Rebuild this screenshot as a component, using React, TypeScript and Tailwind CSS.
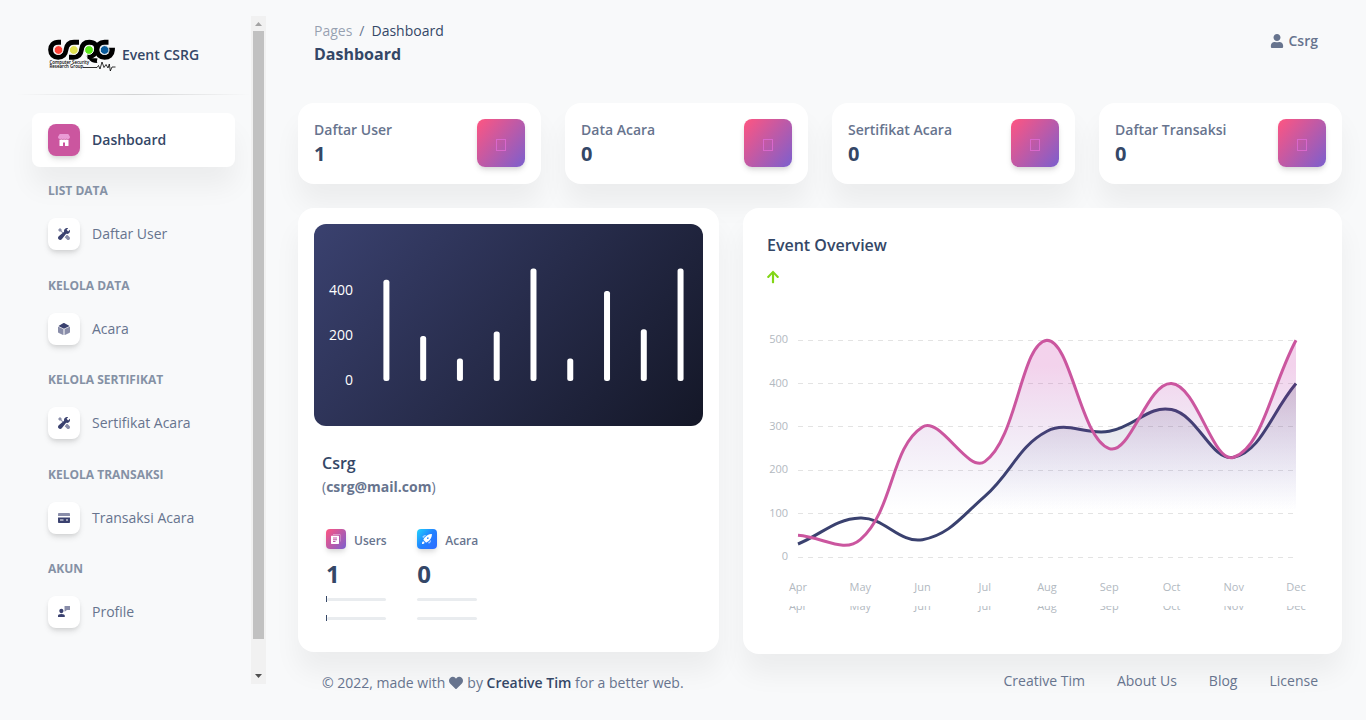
import type { ReactNode } from "react";
import { FaArrowUp, FaHeart, FaUser } from "react-icons/fa";

/* ---------- icons ---------- */

function ShopIcon() {
  return (
    <svg viewBox="0 0 47 47" className="size-3" fill="#fff" aria-hidden="true">
      <path
        fill="#ea9bd6"
        d="M46.72,10.74 L40.84,.95 C40.49,.36 39.85,0 39.17,0 L7.83,0 C7.15,0 6.51,.36 6.16,.95 L.28,10.74 C.1,11.05 0,11.39 0,11.75 C0,16.07 3.48,19.57 7.8,19.58 C9.75,19.59 11.62,18.87 13.05,17.58 C16.02,20.26 20.53,20.26 23.49,17.58 C26.46,20.26 30.98,20.26 33.95,17.58 C36.24,19.65 39.54,20.17 42.37,18.91 C45.19,17.65 47,14.84 47,11.75 C47,11.39 46.9,11.05 46.72,10.74 Z"
      />
      <path d="M39.2,22.49 C37.38,22.49 35.58,22.01 33.95,21.1 C31.14,22.68 27.93,22.93 24.98,21.8 C24.48,21.61 23.98,21.37 23.5,21.1 C20.7,22.69 17.48,22.93 14.54,21.8 C14.03,21.61 13.53,21.37 13.05,21.1 C11.43,22.02 9.63,22.49 7.82,22.49 C7.17,22.48 6.52,22.42 5.88,22.29 L5.88,44.72 C5.88,45.95 6.75,46.95 7.83,46.95 L19.58,46.95 L19.58,33.6 L27.42,33.6 L27.42,46.95 L39.17,46.95 C40.25,46.95 41.13,45.95 41.13,44.72 L41.13,22.28 C40.49,22.41 39.84,22.48 39.2,22.49 Z" />
    </svg>
  );
}

function ToolsIcon() {
  return (
    <svg viewBox="0 0 40 40" className="size-3" fill="#3a416f" aria-hidden="true">
      <path
        opacity=".6"
        d="M18.09,15.73 L11.18,8.82 L13.33,6.67 L6.67,0 L0,6.67 L6.67,13.33 L8.82,11.18 L15.3,17.67 Z M31.57,23.23 C31.05,23.29 30.53,23.33 30,23.33 C29.49,23.33 28.99,23.3 28.48,23.25 L22.41,30.74 L29.94,38.27 C32.24,40.58 35.97,40.58 38.28,38.27 C40.58,35.97 40.58,32.24 38.28,29.94 Z"
      />
      <path d="M33.79,11.29 L28.72,6.22 L34.06,.87 C32.82,.32 31.45,0 30,0 C24.48,0 20,4.48 20,10 C20,10.99 20.15,11.94 20.42,12.85 L2.44,27.4 C.95,28.71 .06,30.6 0,32.57 C-.06,34.55 .71,36.49 2.11,37.89 C3.47,39.25 5.28,40 7.2,40 C9.27,40 11.24,39.11 12.6,37.57 L27.15,19.58 C28.06,19.85 29.01,20 30,20 C35.52,20 40,15.52 40,10 C40,8.55 39.69,7.18 39.13,5.94 Z" />
    </svg>
  );
}

function BoxIcon() {
  return (
    <svg viewBox="0 0 42 42" className="size-3" fill="#3a416f" aria-hidden="true">
      <path d="M22.76,19.31 L38.9,11.24 C39.7,10.8 39.7,9.8 38.9,9.35 L21.6,.4 C20.9,0 20,0 19.3,.4 L3.1,9.35 C2.3,9.8 2.3,10.8 3.1,11.24 L19.2,19.31 C20.3,19.87 21.6,19.87 22.76,19.31 Z" />
      <path
        opacity=".6"
        d="M22.8,22.4 L22.8,41 C22.8,41.8 23.6,42.2 24.3,41.9 L40.8,33.7 C41.5,33.3 42,32.6 42,31.8 L42,14 C42,13.2 41.2,12.7 40.5,13.1 L23.9,21.3 C23.2,21.6 22.8,22 22.8,22.4 Z M19.2,22.4 L19.2,41 C19.2,41.8 18.4,42.2 17.7,41.9 L1.2,33.7 C.5,33.3 0,32.6 0,31.8 L0,14 C0,13.2 .8,12.7 1.5,13.1 L18.1,21.3 C18.8,21.6 19.2,22 19.2,22.4 Z"
      />
    </svg>
  );
}

function CardIcon() {
  return (
    <svg viewBox="0 0 43 36" className="h-[10px] w-3" fill="#3a416f" aria-hidden="true">
      <path opacity=".6" d="M43,10.75 L43,3.58 C43,1.6 41.4,0 39.42,0 L3.58,0 C1.6,0 0,1.6 0,3.58 L0,10.75 Z" />
      <path d="M0,16.13 L0,32.25 C0,34.23 1.6,35.83 3.58,35.83 L39.42,35.83 C41.4,35.83 43,34.23 43,32.25 L43,16.13 Z M19.71,26.88 L7.17,26.88 L7.17,23.29 L19.71,23.29 Z M35.83,26.88 L28.67,26.88 L28.67,23.29 L35.83,23.29 Z" />
    </svg>
  );
}

function SupportIcon() {
  return (
    <svg viewBox="0 0 46 42" className="h-[11px] w-3" fill="#3a416f" aria-hidden="true">
      <path
        opacity=".6"
        d="M45,0 L26,0 C25.45,0 25,.45 25,1 L25,20 C25,20.38 25.21,20.73 25.55,20.9 C25.9,21.07 26.3,21.03 26.6,20.8 L34.33,15 L45,15 C45.55,15 46,14.55 46,14 L46,1 C46,.45 45.55,0 45,0 Z"
      />
      <path d="M22.88,32.86 C20.76,32.01 17.32,31 13,31 C8.68,31 5.24,32.01 3.12,32.86 C1.22,33.62 0,35.44 0,37.49 L0,41 C0,41.55 .45,42 1,42 L25,42 C25.55,42 26,41.55 26,41 L26,37.49 C26,35.44 24.78,33.62 22.88,32.86 Z M13,28 C17.43,28 21,22.53 21,18 C21,13.59 17.41,10 13,10 C8.59,10 5,13.59 5,18 C5,22.53 8.57,28 13,28 Z" />
    </svg>
  );
}

function DocumentIcon() {
  return (
    <svg viewBox="0 0 40 40" className="size-[10px]" fill="#fff" aria-hidden="true">
      <path opacity=".5" d="M38,30 L36,30 L36,4 L8,4 L8,1 L36,1 C37.1,1 38,1.9 38,3 Z" />
      <path d="M30,7 L2,7 C.9,7 0,7.9 0,9 L0,38 C0,39.1 .9,40 2,40 L30,40 C31.1,40 32,39.1 32,38 L32,9 C32,7.9 31.1,7 30,7 Z M18,32 L8,32 L8,28 L18,28 Z M24,25 L8,25 L8,21 L24,21 Z M24,18 L8,18 L8,14 L24,14 Z" />
    </svg>
  );
}

function RocketIcon() {
  return (
    <svg viewBox="0 0 40 40" className="size-[10px]" fill="#fff" aria-hidden="true">
      <path d="M39.3,.71 C38.97,.37 38.5,.19 38.03,.22 C14.65,1.44 6.02,22.26 5.93,22.47 C5.68,23.09 5.83,23.8 6.3,24.27 L15.73,33.7 C16.2,34.18 16.91,34.32 17.54,34.07 C17.74,33.98 38.46,25.25 39.78,1.98 C39.81,1.5 39.63,1.04 39.3,.71 Z M25.69,19.02 C24.74,19.98 23.3,20.26 22.06,19.75 C20.81,19.23 20,18.01 20,16.67 C20,15.32 20.81,14.1 22.06,13.59 C23.3,13.07 24.74,13.36 25.69,14.31 C26.99,15.61 26.99,17.72 25.69,19.02 Z M1.86,31.41 C3.05,30.2 4.8,29.73 6.44,30.17 C8.08,30.6 9.36,31.89 9.8,33.53 C10.24,35.17 9.76,36.91 8.56,38.11 C6.71,39.96 0,40 0,40 C0,40 0,33.26 1.86,31.41 Z" />
      <path
        opacity=".6"
        d="M17.26,3.9 C12.49,3.07 7.62,4.62 4.2,8.04 C3.31,8.94 2.54,9.95 1.9,11.04 C1.51,11.7 1.62,12.53 2.16,13.07 L5.47,16.38 C8.55,11.49 12.56,7.25 17.26,3.9 Z M36.1,22.74 C36.93,27.51 35.38,32.38 31.96,35.8 C31.06,36.69 30.05,37.46 28.96,38.1 C28.3,38.49 27.47,38.38 26.93,37.85 L23.62,34.53 C28.51,31.45 32.75,27.44 36.1,22.74 Z"
      />
    </svg>
  );
}

function Logo() {
  return (
    <svg viewBox="0 0 68 34" className="h-[34px] w-[68px]" role="img" aria-label="CSRG">
      <g fill="none" stroke="#000" strokeWidth="4.9">
        <path d="M13,4.2 H10.5 C5.2,4.2 2.6,7.4 2.6,11.8 C2.6,16.2 5.7,19.3 10.2,19.3 C15.4,19.3 17.4,16.5 18,11.8 C18.6,7 20.8,4.2 26,4.2 H31" />
        <path d="M21,19.3 H25.5 C30.8,19.3 32.8,16.5 33.4,11.8 C34,7 36.5,4.2 41.3,4.2 C46.6,4.2 48.8,7 48.6,11 C48.2,15.6 45.2,18.4 39.5,18.8" />
        <path d="M60.5,4.2 H56.5 C51.8,4.2 49,7.2 49,11.8 C49,16.2 52.2,19.3 56.5,19.3 C61.2,19.3 64.2,16.5 64.4,12.2 H58" />
      </g>
      <path d="M37.5,17 C41,21 44.5,20 49.5,20.5 C49,22.5 48.5,24 49.5,25 C45,25 42,23.5 40.5,20.5 Z" />
      <g stroke="#f8f9fa" strokeWidth="1">
        <circle cx="10.5" cy="12" r="4.4" fill="#ff4238" />
        <circle cx="25.8" cy="12" r="4.4" fill="#dfe04e" />
        <circle cx="41" cy="12" r="4.4" fill="#5ce81b" />
        <circle cx="56.6" cy="12" r="4.4" fill="#085a9b" />
      </g>
      <g fill="#000" fontFamily="'Open Sans', sans-serif" fontSize="4.4">
        <text x="1.5" y="26.2">Computer Security</text>
        <text x="1.5" y="30">Research Group</text>
      </g>
      <path
        d="M35,29.5 H49 L50.5,27.5 L52,31 L54,24 L56,29.5 L58,26.5 L60,30 L61.3,26 L62.3,33 L64,29 H67.5"
        fill="none"
        stroke="#000"
        strokeWidth=".8"
      />
    </svg>
  );
}

/* ---------- sidebar ---------- */

type NavEntry = { heading?: string; label: string; icon: ReactNode; active?: boolean };

const nav: NavEntry[] = [
  { label: "Dashboard", icon: <ShopIcon />, active: true },
  { heading: "List Data", label: "Daftar User", icon: <ToolsIcon /> },
  { heading: "Kelola Data", label: "Acara", icon: <BoxIcon /> },
  { heading: "Kelola Sertifikat", label: "Sertifikat Acara", icon: <ToolsIcon /> },
  { heading: "Kelola Transaksi", label: "Transaksi Acara", icon: <CardIcon /> },
  { heading: "Akun", label: "Profile", icon: <SupportIcon /> },
];

const tileShadow = "shadow-[0_4px_6px_-1px_rgba(0,0,0,0.12),0_2px_4px_-1px_rgba(0,0,0,0.07)]";

function Sidebar() {
  return (
    <aside className="my-4 mr-2 ml-4 flex h-[668px] w-[250px] shrink-0">
      <div className="min-w-0 flex-1">
        <a href="#" className="flex h-[78px] items-center gap-[6px] pl-8 text-sm font-semibold whitespace-nowrap">
          <Logo />
          <span>Event CSRG</span>
        </a>
        <hr className="h-px border-0 bg-linear-to-r from-transparent via-black/15 to-transparent" />
        <nav className="mx-4 mt-[18px]">
          <ul className="flex min-h-[526px] flex-col justify-between">
            {nav.map((n) => (
              <li key={n.label}>
                {n.heading && (
                  <h6 className="h-10 pt-4 pl-4 text-xs leading-4 font-bold text-[#8591a5] uppercase">{n.heading}</h6>
                )}
                <a
                  href="#"
                  className={
                    n.active
                      ? "flex h-[54px] items-center gap-3 rounded-lg bg-white px-4 text-sm font-semibold whitespace-nowrap shadow-[0_20px_27px_0_rgba(0,0,0,0.05)]"
                      : "flex h-[54px] items-center gap-3 px-4 text-sm whitespace-nowrap text-[#67748e]"
                  }
                >
                  <span
                    className={`flex size-8 items-center justify-center rounded-lg ${tileShadow} ${n.active ? "bg-[#cb569f]" : "bg-white"}`}
                  >
                    {n.icon}
                  </span>
                  <span>{n.label}</span>
                </a>
              </li>
            ))}
          </ul>
        </nav>
      </div>
      <div className="flex w-[15px] flex-col items-center justify-between bg-[#f1f1f1]" aria-hidden="true">
        <svg viewBox="0 0 15 15" className="size-[15px]">
          <path d="M4,10 H11 L7.5,6 Z" fill="#a3a3a3" />
        </svg>
        <div className="mb-auto h-[91%] w-[11px] bg-[#c1c1c1]" />
        <svg viewBox="0 0 15 15" className="size-[15px]">
          <path d="M4,5 H11 L7.5,9 Z" fill="#505050" />
        </svg>
      </div>
    </aside>
  );
}

/* ---------- cards ---------- */

const cardShadow = "shadow-[0_20px_27px_0_rgba(0,0,0,0.05)]";

const stats = [
  { label: "Daftar User", value: 1 },
  { label: "Data Acara", value: 0 },
  { label: "Sertifikat Acara", value: 0 },
  { label: "Daftar Transaksi", value: 0 },
];

function StatCard({ label, value }: { label: string; value: number }) {
  return (
    <div className={`flex items-start justify-between rounded-2xl bg-white p-4 ${cardShadow}`}>
      <div>
        <p className="text-sm leading-[21px] font-semibold whitespace-nowrap text-[#67748e]">{label}</p>
        <h5 className="text-xl leading-7 font-bold">{value}</h5>
      </div>
      <div
        className={`flex size-12 items-center justify-center rounded-lg bg-linear-130/srgb from-[#ff5581] to-[#7b5fce] ${tileShadow}`}
      >
        <span className="mt-1 h-3 w-[10px] border border-[#d968cc]" />
      </div>
    </div>
  );
}

/* ---------- charts ---------- */

const barValues = [450, 200, 100, 220, 500, 100, 400, 230, 500];

function BarChart() {
  const zero = 157;
  const scale = 0.225;
  return (
    <svg
      viewBox="0 0 389 202"
      className="block h-auto w-full rounded-xl bg-linear-130/srgb from-[#3a416f] to-[#141727]"
      role="img"
      aria-label="Active users"
    >
      <g fill="#fff" fontSize="14" textAnchor="end" fontFamily="'Open Sans', sans-serif">
        {[0, 200, 400].map((v) => (
          <text key={v} x="39" y={zero - v * scale + 4}>
            {v}
          </text>
        ))}
      </g>
      {barValues.map((v, i) => (
        <rect key={i} x={69.4 + i * 36.77} y={zero - v * scale} width="6" height={v * scale} rx="2.5" fill="#fff" />
      ))}
    </svg>
  );
}

const months = ["Apr", "May", "Jun", "Jul", "Aug", "Sep", "Oct", "Nov", "Dec"];
const pinkValues = [50, 40, 300, 220, 500, 250, 400, 230, 500];
const darkValues = [30, 90, 40, 140, 290, 290, 340, 230, 400];

const X0 = 39;
const STEP = 62.25;
const ZERO = 257;
const TOP = 40.2;
const yOf = (v: number) => ZERO - (v * (ZERO - TOP)) / 500;
const clampY = (y: number) => Math.min(ZERO, Math.max(TOP, y));

function spline(values: number[]) {
  const pts = values.map((v, i) => ({ x: X0 + i * STEP, y: yOf(v) }));
  const ctrl = pts.map((p, i) => {
    const prev = pts[Math.max(0, i - 1)];
    const next = pts[Math.min(pts.length - 1, i + 1)];
    const d01 = Math.hypot(p.x - prev.x, p.y - prev.y);
    const d12 = Math.hypot(next.x - p.x, next.y - p.y);
    const fa = (0.4 * d01) / (d01 + d12);
    const fb = (0.4 * d12) / (d01 + d12);
    const dx = next.x - prev.x;
    const dy = next.y - prev.y;
    return {
      ax: p.x - fa * dx,
      ay: clampY(p.y - fa * dy),
      bx: p.x + fb * dx,
      by: clampY(p.y + fb * dy),
    };
  });
  let d = `M${pts[0].x},${pts[0].y}`;
  for (let i = 1; i < pts.length; i++) {
    const a = ctrl[i - 1];
    const b = ctrl[i];
    d += ` C${a.bx},${a.by} ${b.ax},${b.ay} ${pts[i].x},${pts[i].y}`;
  }
  return d;
}

function LineChart() {
  const right = X0 + 8 * STEP;
  const close = ` L${right},${ZERO} L${X0},${ZERO} Z`;
  const pink = spline(pinkValues);
  const dark = spline(darkValues);
  return (
    <svg viewBox="0 0 567 338" className="block h-auto w-full" role="img" aria-label="Event overview">
      <defs>
        <linearGradient id="pinkFill" gradientUnits="userSpaceOnUse" x1="0" y1="246" x2="0" y2="66">
          <stop offset="0" stopColor="#cb0c9f" stopOpacity="0" />
          <stop offset=".2" stopColor="#4848b0" stopOpacity="0" />
          <stop offset="1" stopColor="#c320a0" stopOpacity=".2" />
        </linearGradient>
        <linearGradient id="darkFill" gradientUnits="userSpaceOnUse" x1="0" y1="246" x2="0" y2="66">
          <stop offset="0" stopColor="#141727" stopOpacity="0" />
          <stop offset=".2" stopColor="#4848b0" stopOpacity="0" />
          <stop offset="1" stopColor="#141727" stopOpacity=".2" />
        </linearGradient>
        <clipPath id="lowerLabels">
          <rect x="0" y="306" width="567" height="20" />
        </clipPath>
      </defs>
      {[0, 100, 200, 300, 400, 500].map((v) => {
        const y = Math.floor(yOf(v)) + 0.5;
        return <path key={v} d={`M${X0},${y} H${right}`} stroke="#e3e3e3" strokeDasharray="5 5" />;
      })}
      <path d={dark + close} fill="url(#darkFill)" />
      <path d={dark} fill="none" stroke="#3a416f" strokeWidth="3" />
      <path d={pink + close} fill="url(#pinkFill)" />
      <path d={pink} fill="none" stroke="#cb569f" strokeWidth="3" />
      <g fill="#b2b9bf" fontSize="11" fontFamily="'Open Sans', sans-serif">
        {[0, 100, 200, 300, 400, 500].map((v) => (
          <text key={v} x="29" y={Math.round(yOf(v)) + 3} textAnchor="end">
            {v}
          </text>
        ))}
        {months.map((m, i) => (
          <text key={m} x={X0 + i * STEP} y="291" textAnchor="middle">
            {m}
          </text>
        ))}
        <g clipPath="url(#lowerLabels)" aria-hidden="true">
          {months.map((m, i) => (
            <text key={m} x={X0 + i * STEP} y="310" textAnchor="middle">
              {m}
            </text>
          ))}
        </g>
      </g>
    </svg>
  );
}

function Track({ marked }: { marked: boolean }) {
  return (
    <div className="flex h-[6px] w-[60px] items-center">
      {marked && <div className="h-[6px] w-px bg-[#344767]" />}
      <div className="h-[3px] flex-1 rounded-sm bg-[#e9ecef]" />
    </div>
  );
}

function Counter({ label, value, icon, tile }: { label: string; value: number; icon: ReactNode; tile: string }) {
  return (
    <div>
      <div className="flex items-start gap-2">
        <div className={`flex size-5 items-center justify-center rounded-sm bg-linear-130/srgb ${tile} ${tileShadow}`}>{icon}</div>
        <p className="pt-1 text-xs leading-4 font-semibold text-[#67748e]">{label}</p>
      </div>
      <h4 className="mt-2 mb-[5px] text-2xl leading-[34px] font-bold">{value}</h4>
      <div className="flex flex-col gap-[13px]">
        <Track marked={value > 0} />
        <Track marked={value > 0} />
      </div>
    </div>
  );
}

/* ---------- page ---------- */

export default function App() {
  return (
    <div className="flex min-h-[720px] items-start bg-[#f8f9fa] font-['Open_Sans',sans-serif] text-[#344767]">
      <Sidebar />
      <main className="min-w-0 flex-1 px-6">
        <header className="flex h-[79px] items-start justify-between px-4 pt-5">
          <div>
            <ol className="flex gap-[7px] text-sm leading-[22px]">
              <li className="text-[#344767]/50">
                <a href="#">Pages</a>
              </li>
              <li className="text-[#67748e]">/</li>
              <li>Dashboard</li>
            </ol>
            <h6 className="text-base leading-6 font-bold">Dashboard</h6>
          </div>
          <a href="#" className="mt-[11px] mr-2 flex items-center gap-[5px] text-sm leading-5 font-semibold text-[#67748e]">
            <FaUser className="size-[14px]" />
            <span>Csrg</span>
          </a>
        </header>

        <section className="mt-6 grid grid-cols-4 gap-6">
          {stats.map((s) => (
            <StatCard key={s.label} {...s} />
          ))}
        </section>

        <section className="mt-6 grid grid-cols-12 items-start gap-6">
          <div className={`col-span-5 rounded-2xl bg-white p-4 pb-[31px] ${cardShadow}`}>
            <BarChart />
            <div className="mt-6 px-2">
              <h6 className="text-base leading-[26px] font-semibold">Csrg</h6>
              <p className="text-sm leading-[22px] text-[#67748e]">
                (<span className="font-bold">csrg@mail.com</span>)
              </p>
            </div>
            <div className="mt-[31px] grid grid-cols-4 px-3">
              <Counter label="Users" value={1} icon={<DocumentIcon />} tile="from-[#ff5581] to-[#7b5fce]" />
              <Counter label="Acara" value={0} icon={<RocketIcon />} tile="from-[#21d4fd] via-[#2180ff] to-[#2f6bff]" />
            </div>
          </div>

          <div className={`col-span-7 rounded-2xl bg-white px-4 pb-4 ${cardShadow}`}>
            <div className="h-[92px] px-2 pt-6">
              <h6 className="text-base leading-[26px] font-semibold">Event Overview</h6>
              <FaArrowUp className="mt-3 size-[14px] -ml-px text-[#82d616]" />
            </div>
            <LineChart />
          </div>
        </section>

        <footer className="-mt-px flex items-start justify-between px-6 text-sm leading-5 text-[#67748e]">
          <p className="mt-5 flex items-center gap-1">
            <span>© 2022, made with</span>
            <FaHeart className="size-[14px]" />
            <span>
              by{" "}
              <a href="#" className="font-semibold text-[#344767]">
                Creative Tim
              </a>{" "}
              for a better web.
            </span>
          </p>
          <ul className="mt-[18px] flex gap-8">
            {["Creative Tim", "About Us", "Blog", "License"].map((l) => (
              <li key={l}>
                <a href="#">{l}</a>
              </li>
            ))}
          </ul>
        </footer>
      </main>
    </div>
  );
}
